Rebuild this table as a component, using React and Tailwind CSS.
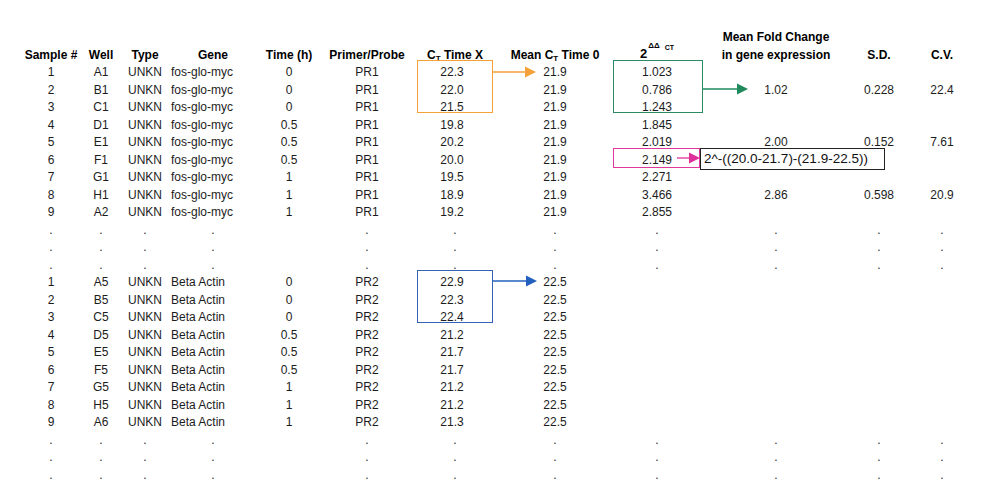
import React from "react";

const COLS =
  "grid grid-cols-[58px_42px_46px_90px_62px_94px_82px_118px_86px_152px_54px_72px]";

const fos = [
  ["1", "A1", "0", "22.3", "1.023", "", "", ""],
  ["2", "B1", "0", "22.0", "0.786", "1.02", "0.228", "22.4"],
  ["3", "C1", "0", "21.5", "1.243", "", "", ""],
  ["4", "D1", "0.5", "19.8", "1.845", "", "", ""],
  ["5", "E1", "0.5", "20.2", "2.019", "2.00", "0.152", "7.61"],
  ["6", "F1", "0.5", "20.0", "2.149", "", "", ""],
  ["7", "G1", "1", "19.5", "2.271", "", "", ""],
  ["8", "H1", "1", "18.9", "3.466", "2.86", "0.598", "20.9"],
  ["9", "A2", "1", "19.2", "2.855", "", "", ""],
];

const actin = [
  ["1", "A5", "0", "22.9"],
  ["2", "B5", "0", "22.3"],
  ["3", "C5", "0", "22.4"],
  ["4", "D5", "0.5", "21.2"],
  ["5", "E5", "0.5", "21.7"],
  ["6", "F5", "0.5", "21.7"],
  ["7", "G5", "1", "21.2"],
  ["8", "H5", "1", "21.2"],
  ["9", "A6", "1", "21.3"],
];

const Cell = ({ children }) => <div className="text-center whitespace-nowrap">{children}</div>;

const Row = ({ s, well, gene, time, pr, ctx, mean, dd = "", fold = "", sd = "", cv = "" }) => (
  <>
    <Cell>{s}</Cell>
    <Cell>{well}</Cell>
    <Cell>UNKN</Cell>
    <div className="pl-[3px] whitespace-nowrap">{gene}</div>
    <Cell>{time}</Cell>
    <Cell>{pr}</Cell>
    <div className="text-center pr-[6px]">{ctx}</div>
    <Cell>{mean}</Cell>
    <Cell>{dd}</Cell>
    <Cell>{fold}</Cell>
    <Cell>{sd}</Cell>
    <Cell>{cv}</Cell>
  </>
);

const DotRow = () => (
  <>
    <Cell>.</Cell>
    <Cell>.</Cell>
    <Cell>.</Cell>
    <Cell>.</Cell>
    <Cell></Cell>
    <Cell>.</Cell>
    <Cell>.</Cell>
    <Cell>.</Cell>
    <Cell>.</Cell>
    <Cell>.</Cell>
    <Cell>.</Cell>
    <Cell>.</Cell>
  </>
);

const Arrow = ({ className, width, color }) => (
  <svg className={className} width={width} height="12" viewBox={`0 0 ${width} 12`}>
    <line x1="0" y1="6" x2={width - 9} y2="6" stroke={color} strokeWidth="1.3" />
    <polygon points={`${width - 11},0.5 ${width},6 ${width - 11},11.5`} fill={color} />
  </svg>
);

export default function App() {
  return (
    <div className="relative w-[991px] h-[499px] bg-white overflow-hidden font-['Liberation_Sans',Arial,sans-serif] text-[12px] text-[#1c1c1c]">
      <div className={`${COLS} grid-rows-[35px] auto-rows-[17.5px] leading-[17.5px] pl-[22px] pt-[29px]`}>
        {/* Header */}
        <div className="flex items-end justify-center font-bold text-black">Sample #</div>
        <div className="flex items-end justify-center font-bold text-black">Well</div>
        <div className="flex items-end justify-center font-bold text-black">Type</div>
        <div className="flex items-end justify-center font-bold text-black">Gene</div>
        <div className="flex items-end justify-center font-bold text-black">Time (h)</div>
        <div className="flex items-end justify-center font-bold text-black">Primer/Probe</div>
        <div className="flex items-end justify-center font-bold text-black whitespace-nowrap">
          <span>
            C<sub className="text-[8px]">T</sub> Time X
          </span>
        </div>
        <div className="flex items-end justify-center font-bold text-black whitespace-nowrap">
          <span>
            Mean C<sub className="text-[8px]">T</sub> Time 0
          </span>
        </div>
        <div className="flex items-end justify-center font-bold text-black whitespace-nowrap">
          <span className="text-[13px]">
            2
            <span className="relative -top-[10px] text-[8px] ml-[1px]">ΔΔ</span>
            <span className="relative -top-[8px] text-[7px] ml-[5px]">CT</span>
          </span>
        </div>
        <div className="flex flex-col items-center justify-end font-bold text-black whitespace-nowrap">
          <span>Mean Fold Change</span>
          <span>in gene expression</span>
        </div>
        <div className="flex items-end justify-center font-bold text-black">S.D.</div>
        <div className="flex items-end justify-center font-bold text-black">C.V.</div>

        {fos.map(([s, well, time, ctx, dd, fold, sd, cv]) => (
          <Row key={"f" + s} s={s} well={well} gene="fos-glo-myc" time={time} pr="PR1" ctx={ctx} mean="21.9" dd={dd} fold={fold} sd={sd} cv={cv} />
        ))}
        <DotRow />
        <DotRow />
        <DotRow />
        {actin.map(([s, well, time, ctx]) => (
          <Row key={"a" + s} s={s} well={well} gene="Beta Actin" time={time} pr="PR2" ctx={ctx} mean="22.5" />
        ))}
        <DotRow />
        <DotRow />
        <DotRow />
      </div>

      {/* Annotations */}
      <div className="absolute left-[417px] top-[60px] w-[76px] h-[53px] border border-[#f4a13a]" />
      <Arrow className="absolute left-[493px] top-[66px]" width={43} color="#f4a13a" />

      <div className="absolute left-[613px] top-[60px] w-[90px] h-[53px] border border-[#2b8a63]" />
      <Arrow className="absolute left-[703px] top-[83px]" width={45} color="#1f8a5c" />

      <div className="absolute left-[417px] top-[270px] w-[76px] h-[53px] border border-[#3462b5]" />
      <Arrow className="absolute left-[493px] top-[275px]" width={44} color="#2360bd" />

      <div className="absolute left-[613px] top-[148px] w-[87px] h-[20px] border border-[#e0399b]" />
      <Arrow className="absolute left-[677px] top-[152px]" width={23} color="#e0309a" />
      <div className="absolute left-[700px] top-[148px] w-[185px] h-[22px] border border-[#222] pl-[3px] text-[13.5px] leading-[20px] text-[#111] whitespace-nowrap">
        2^-((20.0-21.7)-(21.9-22.5))
      </div>
    </div>
  );
}
